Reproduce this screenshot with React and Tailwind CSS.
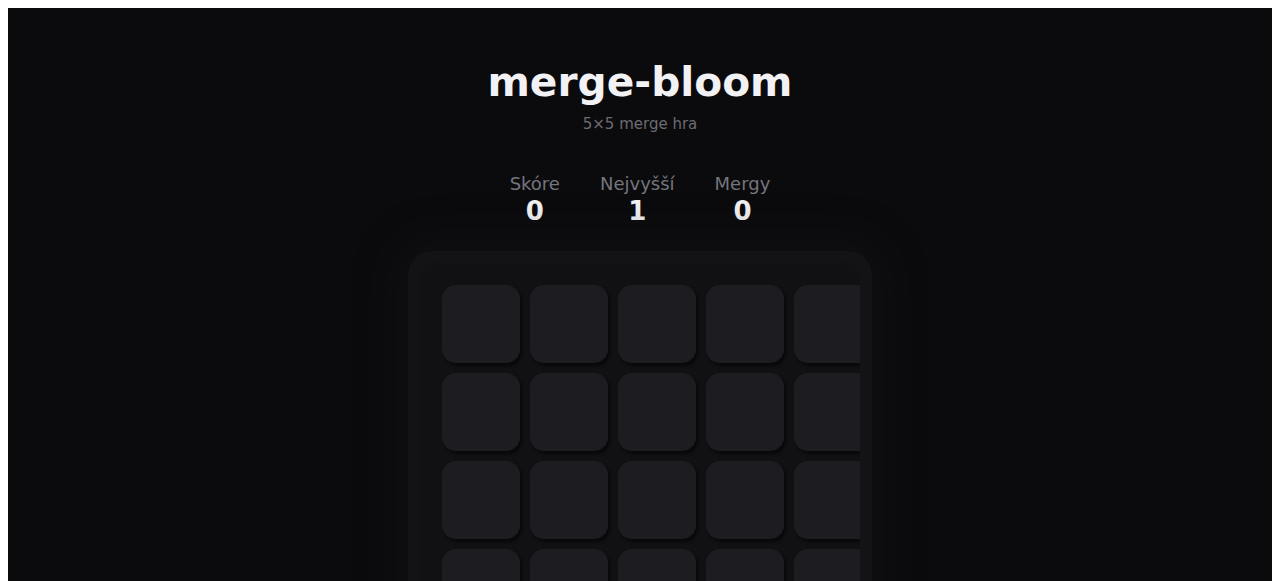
import React from 'react';

const stats = [
    { label: 'Skóre', value: 0 },
    { label: 'Nejvyšší', value: 1 },
    { label: 'Mergy', value: 0 },
];

const Tile = () => (
    <div className="w-[78px] h-[78px] shrink-0 rounded-[14px] bg-[#1d1d21] shadow-[2px_3px_3px_rgba(0,0,0,0.55)]" />
);

const Board = () => {
    return (
        <div className="w-[464px] rounded-[24px] bg-[#131316] p-3 shadow-[0_0_40px_12px_rgba(22,22,27,0.45)]">
            <div className="w-[440px] h-[600px] rounded-[16px] bg-[#111113] overflow-hidden pl-[22px] pt-[22px]">
                <div className="grid grid-cols-[repeat(5,78px)] gap-[10px] w-[430px]">
                    {Array.from({ length: 25 }).map((_, i) => (
                        <Tile key={i} />
                    ))}
                </div>
            </div>
        </div>
    );
};

export default function App() {
    return (
        <div className="h-[581px] overflow-hidden bg-white pt-2 px-2 font-['DejaVu_Sans',sans-serif]">
            <div className="h-[600px] bg-[#0b0b0d] flex flex-col items-center pt-[50px]">
                <h1 className="text-[40.7px] leading-[48px] font-bold text-[#f2f2f5]">merge-bloom</h1>
                <p className="mt-[8px] text-[15px] leading-5 text-[#6b6b72]">5×5 merge hra</p>

                <div className="mt-[38px] flex gap-10">
                    {stats.map((s) => (
                        <div key={s.label} className="flex flex-col items-center">
                            <span className="text-lg leading-6 text-[#75757d]">{s.label}</span>
                            <span className="mt-px text-[26px] leading-7 font-bold text-[#f2f2f5]">{s.value}</span>
                        </div>
                    ))}
                </div>

                <div className="mt-[26px]">
                    <Board />
                </div>
            </div>
        </div>
    );
}
